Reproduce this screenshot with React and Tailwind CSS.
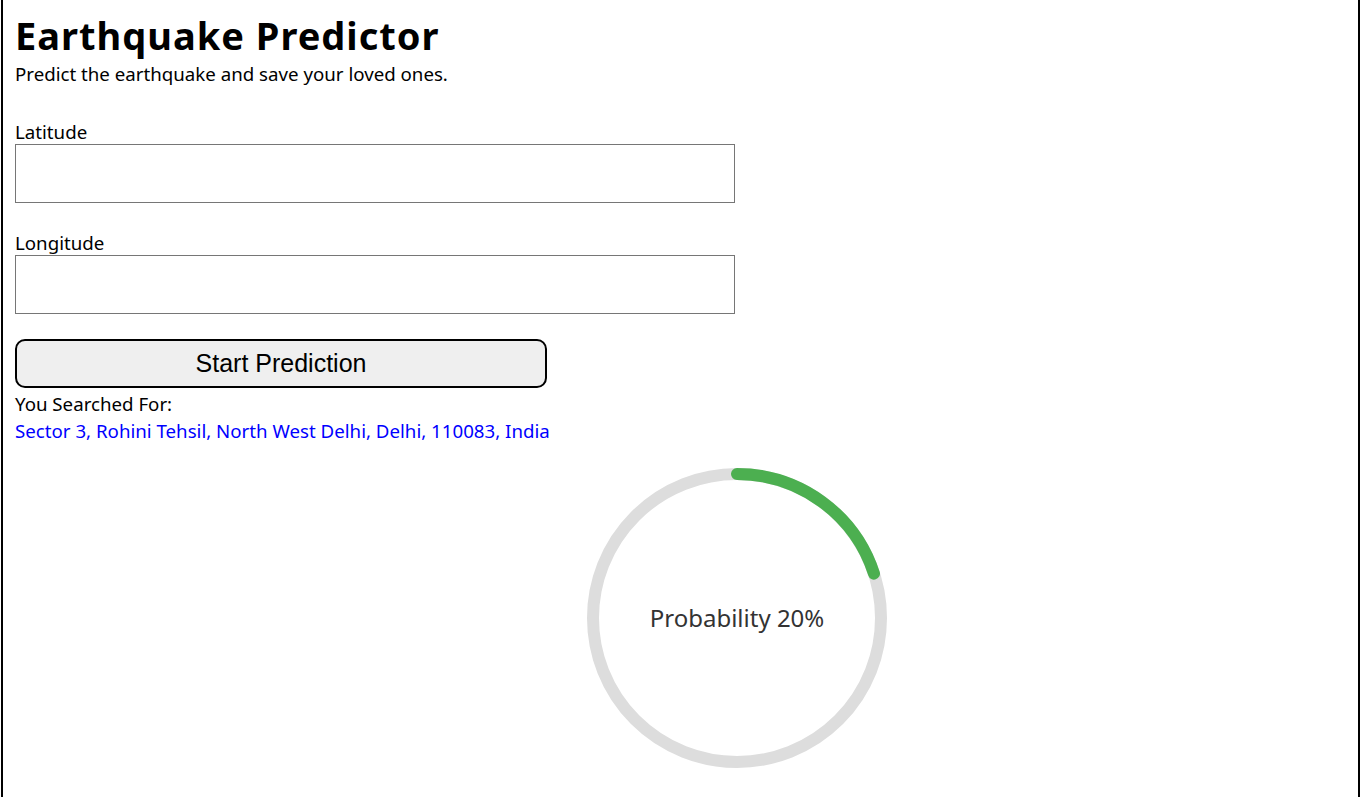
import { useState } from "react";

function ProgressRing({ value }) {
	const r = 144;
	const c = 2 * Math.PI * r;
	return (
		<div className="relative w-[310px] h-[310px]">
			<svg width="310" height="310" viewBox="0 0 310 310">
				<circle cx="155" cy="155" r={r} fill="none" stroke="#dddddd" strokeWidth="12" />
				<circle
					cx="155"
					cy="155"
					r={r}
					fill="none"
					stroke="#4caf50"
					strokeWidth="12"
					strokeLinecap="round"
					strokeDasharray={`${(c * value) / 100} ${c}`}
					transform="rotate(-90 155 155)"
				/>
			</svg>
			<div className="absolute inset-0 flex justify-center items-center text-[24px] text-[#333333] font-['Noto_Sans',sans-serif]">
				Probability {value}%
			</div>
		</div>
	);
}

export default function App() {
	const [lat, setLat] = useState("");
	const [lng, setLng] = useState("");

	return (
		<div className="ml-px w-[1359px] min-h-[900px] border-x-2 border-black bg-white px-[12px] pt-[12px] font-['Noto_Sans',sans-serif] text-black">
			<h1 className="text-[38px] leading-[46px] font-bold tracking-[1px]">Earthquake Predictor</h1>
			<p className="text-[18.7px] leading-[24px] mt-[4px]">Predict the earthquake and save your loved ones.</p>

			<div className="mt-[34px] w-[720px]">
				<label className="block text-[18.7px] leading-[24px]">Latitude</label>
				<input value={lat} onChange={(e) => setLat(e.target.value)} className="block w-full h-[59px] border border-[#767676] px-2 text-[18px]" />
			</div>

			<div className="mt-[28px] w-[720px]">
				<label className="block text-[18.7px] leading-[24px]">Longitude</label>
				<input value={lng} onChange={(e) => setLng(e.target.value)} className="block w-full h-[59px] border border-[#767676] px-2 text-[18px]" />
			</div>

			<button className="mt-[25px] w-[532px] h-[49px] border-2 border-black rounded-[10px] bg-[#efefef] text-[25px] font-['Liberation_Sans',Arial,sans-serif]">
				Start Prediction
			</button>

			<p className="text-[18.7px] leading-[24px] mt-[4px]">You Searched For:</p>
			<p className="text-[18.7px] leading-[24px] mt-[3px] text-[#0000ff]">Sector 3, Rohini Tehsil, North West Delhi, Delhi, 110083, India</p>

			<div className="mt-[20px] ml-[567px]">
				<ProgressRing value={20} />
			</div>
		</div>
	);
}
